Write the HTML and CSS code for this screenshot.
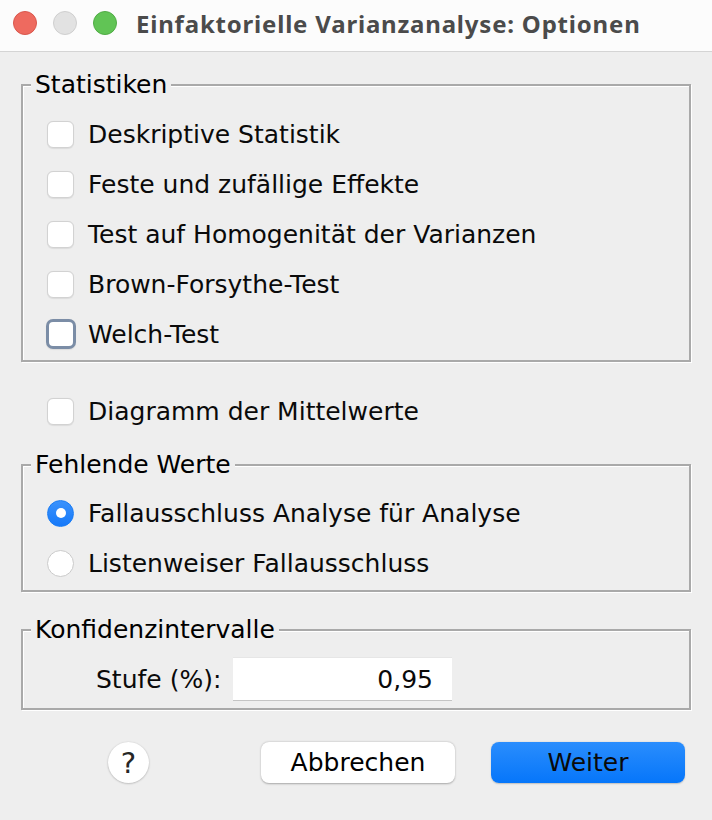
FILE: index.html
```html
<!DOCTYPE html>
<html lang="de">
<head>
<meta charset="utf-8">
<title>Einfaktorielle Varianzanalyse: Optionen</title>
<link rel="stylesheet" href="styles.css">
</head>
<body>
<div class="window">
  <div class="titlebar">
    <span class="light red"></span>
    <span class="light grey"></span>
    <span class="light green"></span>
    <span class="title">Einfaktorielle Varianzanalyse: Optionen</span>
  </div>
  <div class="content">
    <fieldset class="group group-stats">
      <legend>Statistiken</legend>
      <label class="row"><span class="check"></span><span>Deskriptive Statistik</span></label>
      <label class="row"><span class="check"></span><span>Feste und zufällige Effekte</span></label>
      <label class="row"><span class="check"></span><span>Test auf Homogenität der Varianzen</span></label>
      <label class="row"><span class="check"></span><span>Brown-Forsythe-Test</span></label>
      <label class="row"><span class="check focus"></span><span>Welch-Test</span></label>
    </fieldset>

    <label class="row single"><span class="check"></span><span>Diagramm der Mittelwerte</span></label>

    <fieldset class="group group-missing">
      <legend>Fehlende Werte</legend>
      <label class="row"><span class="radio on"></span><span>Fallausschluss Analyse für Analyse</span></label>
      <label class="row"><span class="radio"></span><span>Listenweiser Fallausschluss</span></label>
    </fieldset>

    <fieldset class="group group-ci">
      <legend>Konfidenzintervalle</legend>
      <div class="ci-row">
        <span class="ci-label">Stufe (%):</span>
        <span class="ci-input">0,95</span>
      </div>
    </fieldset>

    <div class="buttons">
      <span class="help">?</span>
      <span class="btn">Abbrechen</span>
      <span class="btn primary">Weiter</span>
    </div>
  </div>
</div>
</body>
</html>
```
FILE: styles.css
```css
html, body {
  margin: 0;
  padding: 0;
}
body {
  width: 712px;
  height: 820px;
  background: #eeeeee;
  font-family: "DejaVu Sans", "Noto Sans", sans-serif;
  font-size: 25px;
  color: #0a0a0a;
  overflow: hidden;
}
.window {
  width: 712px;
  height: 820px;
  background: #eeeeee;
}
.titlebar {
  height: 46px;
  padding-bottom: 5px;
  background: #fcfcfc;
  border-bottom: 1px solid #d4d4d4;
  display: flex;
  align-items: center;
  padding-left: 13px;
  box-sizing: content-box;
}
.light {
  width: 24px;
  height: 24px;
  border-radius: 50%;
  box-sizing: border-box;
  margin-right: 16px;
}
.light.red { background: #ee6a5f; border: 1px solid #d9574d; }
.light.grey { background: #e2e2e2; border: 1px solid #cfcfcf; }
.light.green { background: #61c455; border: 1px solid #50ac45; }
.title {
  margin-left: 3px;
  font-family: "Noto Sans", "Open Sans", sans-serif;
  font-weight: bold;
  font-size: 24px;
  color: #4b4b4b;
  letter-spacing: 0.8px;
  white-space: nowrap;
}
.content {
  padding: 0 21px;
}
.group {
  margin: 0;
  border: 2px solid #a9a9a9;
  box-shadow: 1px 1px 0 #ffffff, inset 1px 1px 0 #ffffff;
  padding: 0 0 0 24px;
  min-width: 0;
}
.group legend {
  line-height: 30px;
  padding: 0 4px;
  margin-left: -16px;
  background: #eeeeee;
  color: #000;
}
.group-stats {
  margin-top: 18px;
  padding-top: 9px;
  padding-bottom: 1px;
}
.row {
  height: 50px;
  display: flex;
  align-items: center;
  gap: 14px;
}
.single {
  margin-top: 24px;
  padding-left: 26px;
}
.check {
  width: 27px;
  height: 27px;
  box-sizing: border-box;
  background: #ffffff;
  border: 1px solid #d2d2d2;
  border-radius: 6px;
  box-shadow: 0 0.5px 1px rgba(0,0,0,0.08);
  flex: none;
}
.check.focus {
  border: 3px solid #7b8da6;
  width: 30px;
  height: 30px;
  margin-left: -1.5px;
  margin-right: -1.5px;
  border-radius: 7px;
}
.radio {
  width: 27px;
  height: 27px;
  box-sizing: border-box;
  border-radius: 50%;
  background: #ffffff;
  border: 1px solid #cacaca;
  flex: none;
  display: flex;
  align-items: center;
  justify-content: center;
}
.radio.on {
  background: linear-gradient(#3a92fc, #1679f9);
  border: 1px solid #1a7cf4;
}
.radio.on::after {
  content: "";
  width: 10px;
  height: 10px;
  border-radius: 50%;
  background: #ffffff;
}
.group-missing {
  margin-top: 14px;
  padding-top: 8px;
  padding-bottom: 2px;
}
.group-ci {
  margin-top: 23px;
  padding-top: 12px;
  padding-bottom: 7px;
}
.ci-row {
  display: flex;
  align-items: center;
  gap: 24px;
  padding-left: 49px;
}
.ci-label {
  width: 113px;
  white-space: nowrap;
}
.ci-input {
  width: 219px;
  height: 44px;
  box-sizing: border-box;
  background: #ffffff;
  border-top: 1px solid #e6e6e6;
  border-bottom: 1px solid #c4c4c4;
  display: flex;
  align-items: center;
  justify-content: flex-end;
  padding-right: 19px;
}
.buttons {
  margin-top: 32px;
  display: flex;
  align-items: center;
  padding-left: 87px;
  padding-right: 6px;
  gap: 36px;
}
.help {
  width: 41px;
  height: 41px;
  border-radius: 50%;
  background: #ffffff;
  box-shadow: 0 0.5px 2px rgba(0,0,0,0.3);
  display: flex;
  align-items: center;
  justify-content: center;
  font-size: 29px;
  color: #262626;
  margin-right: auto;
}
.btn {
  width: 194px;
  height: 41px;
  border-radius: 8px;
  background: #ffffff;
  box-shadow: 0 0.5px 2px rgba(0,0,0,0.3);
  display: flex;
  align-items: center;
  justify-content: center;
  color: #000;
}
.btn.primary {
  background: linear-gradient(#2a8dfd, #0676fa);
  box-shadow: 0 0.5px 1.5px rgba(0,0,0,0.2);
  color: #0a0a0a;
}
```
